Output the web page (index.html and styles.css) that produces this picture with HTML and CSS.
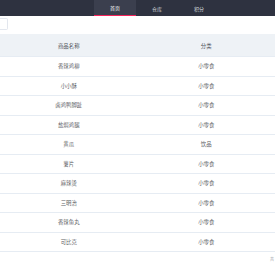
FILE: index.html
```html
<!DOCTYPE html>
<html lang="zh">
<head>
  <meta charset="utf-8" />
  <title>商品列表</title>
  <link rel="stylesheet" href="styles.css">
</head>
<body>
  <div class="header">
    <div class="nav">
      <a class="nav-item active">首页</a>
      <a class="nav-item">仓库</a>
      <a class="nav-item">积分</a>
    </div>
  </div>
  <div class="toolbar">
    <div class="search-box"></div>
  </div>
  <table class="goods-table">
    <thead>
      <tr><th>商品名称</th><th>分类</th></tr>
    </thead>
    <tbody>
      <tr><td>香辣鸡柳</td><td>小零食</td></tr>
      <tr><td>小小酥</td><td>小零食</td></tr>
      <tr><td>卤鸡鸭脚趾</td><td>小零食</td></tr>
      <tr><td>盐焗鸡腿</td><td>小零食</td></tr>
      <tr><td>黄瓜</td><td>饮品</td></tr>
      <tr><td>薯片</td><td>小零食</td></tr>
      <tr><td>麻辣烫</td><td>小零食</td></tr>
      <tr><td>三明治</td><td>小零食</td></tr>
      <tr><td>香辣鱼丸</td><td>小零食</td></tr>
      <tr><td>可比克</td><td>小零食</td></tr>
    </tbody>
  </table>
  <div class="pager">共</div>
</body>
</html>
```

FILE: styles.css
```css
body {
  margin: 0;
  padding: 0;
  background-color: #fff;
  font-family: "Noto Sans CJK SC", "Noto Sans", sans-serif;
  color: #606266;
  overflow: hidden;
}
.header {
  height: 16px;
  background-color: #2e3240;
  display: flex;
}
.nav {
  display: flex;
  margin-left: 94px;
}
.nav-item {
  width: 42px;
  height: 16px;
  box-sizing: border-box;
  display: flex;
  align-items: center;
  justify-content: center;
  font-size: 5px;
  color: #d5d8de;
}
.nav-item.active {
  background-color: #3b3f4e;
  border-bottom: 1px solid #f5225a;
  color: #fff;
}
.toolbar {
  height: 18px;
  padding-top: 2px;
  box-sizing: border-box;
}
.search-box {
  width: 8px;
  height: 12px;
  box-sizing: border-box;
  border: 1px solid #e3e7ee;
  border-left: none;
  border-radius: 0 2px 2px 0;
}
.goods-table {
  width: 100%;
  border-collapse: collapse;
  font-size: 5.4px;
}
.goods-table th,
.goods-table td {
  width: 50%;
  text-align: center;
  font-weight: normal;
  padding: 0;
  border-bottom: 1px solid #e6ecf3;
}
.goods-table th {
  height: 20px;
  padding-top: 2px;
  background-color: #eef2f6;
  color: #50545c;
}
.goods-table td {
  height: 18.5px;
}
.pager {
  text-align: right;
  font-size: 4px;
  color: #909399;
  padding: 4px 1px 0 0;
}
```
